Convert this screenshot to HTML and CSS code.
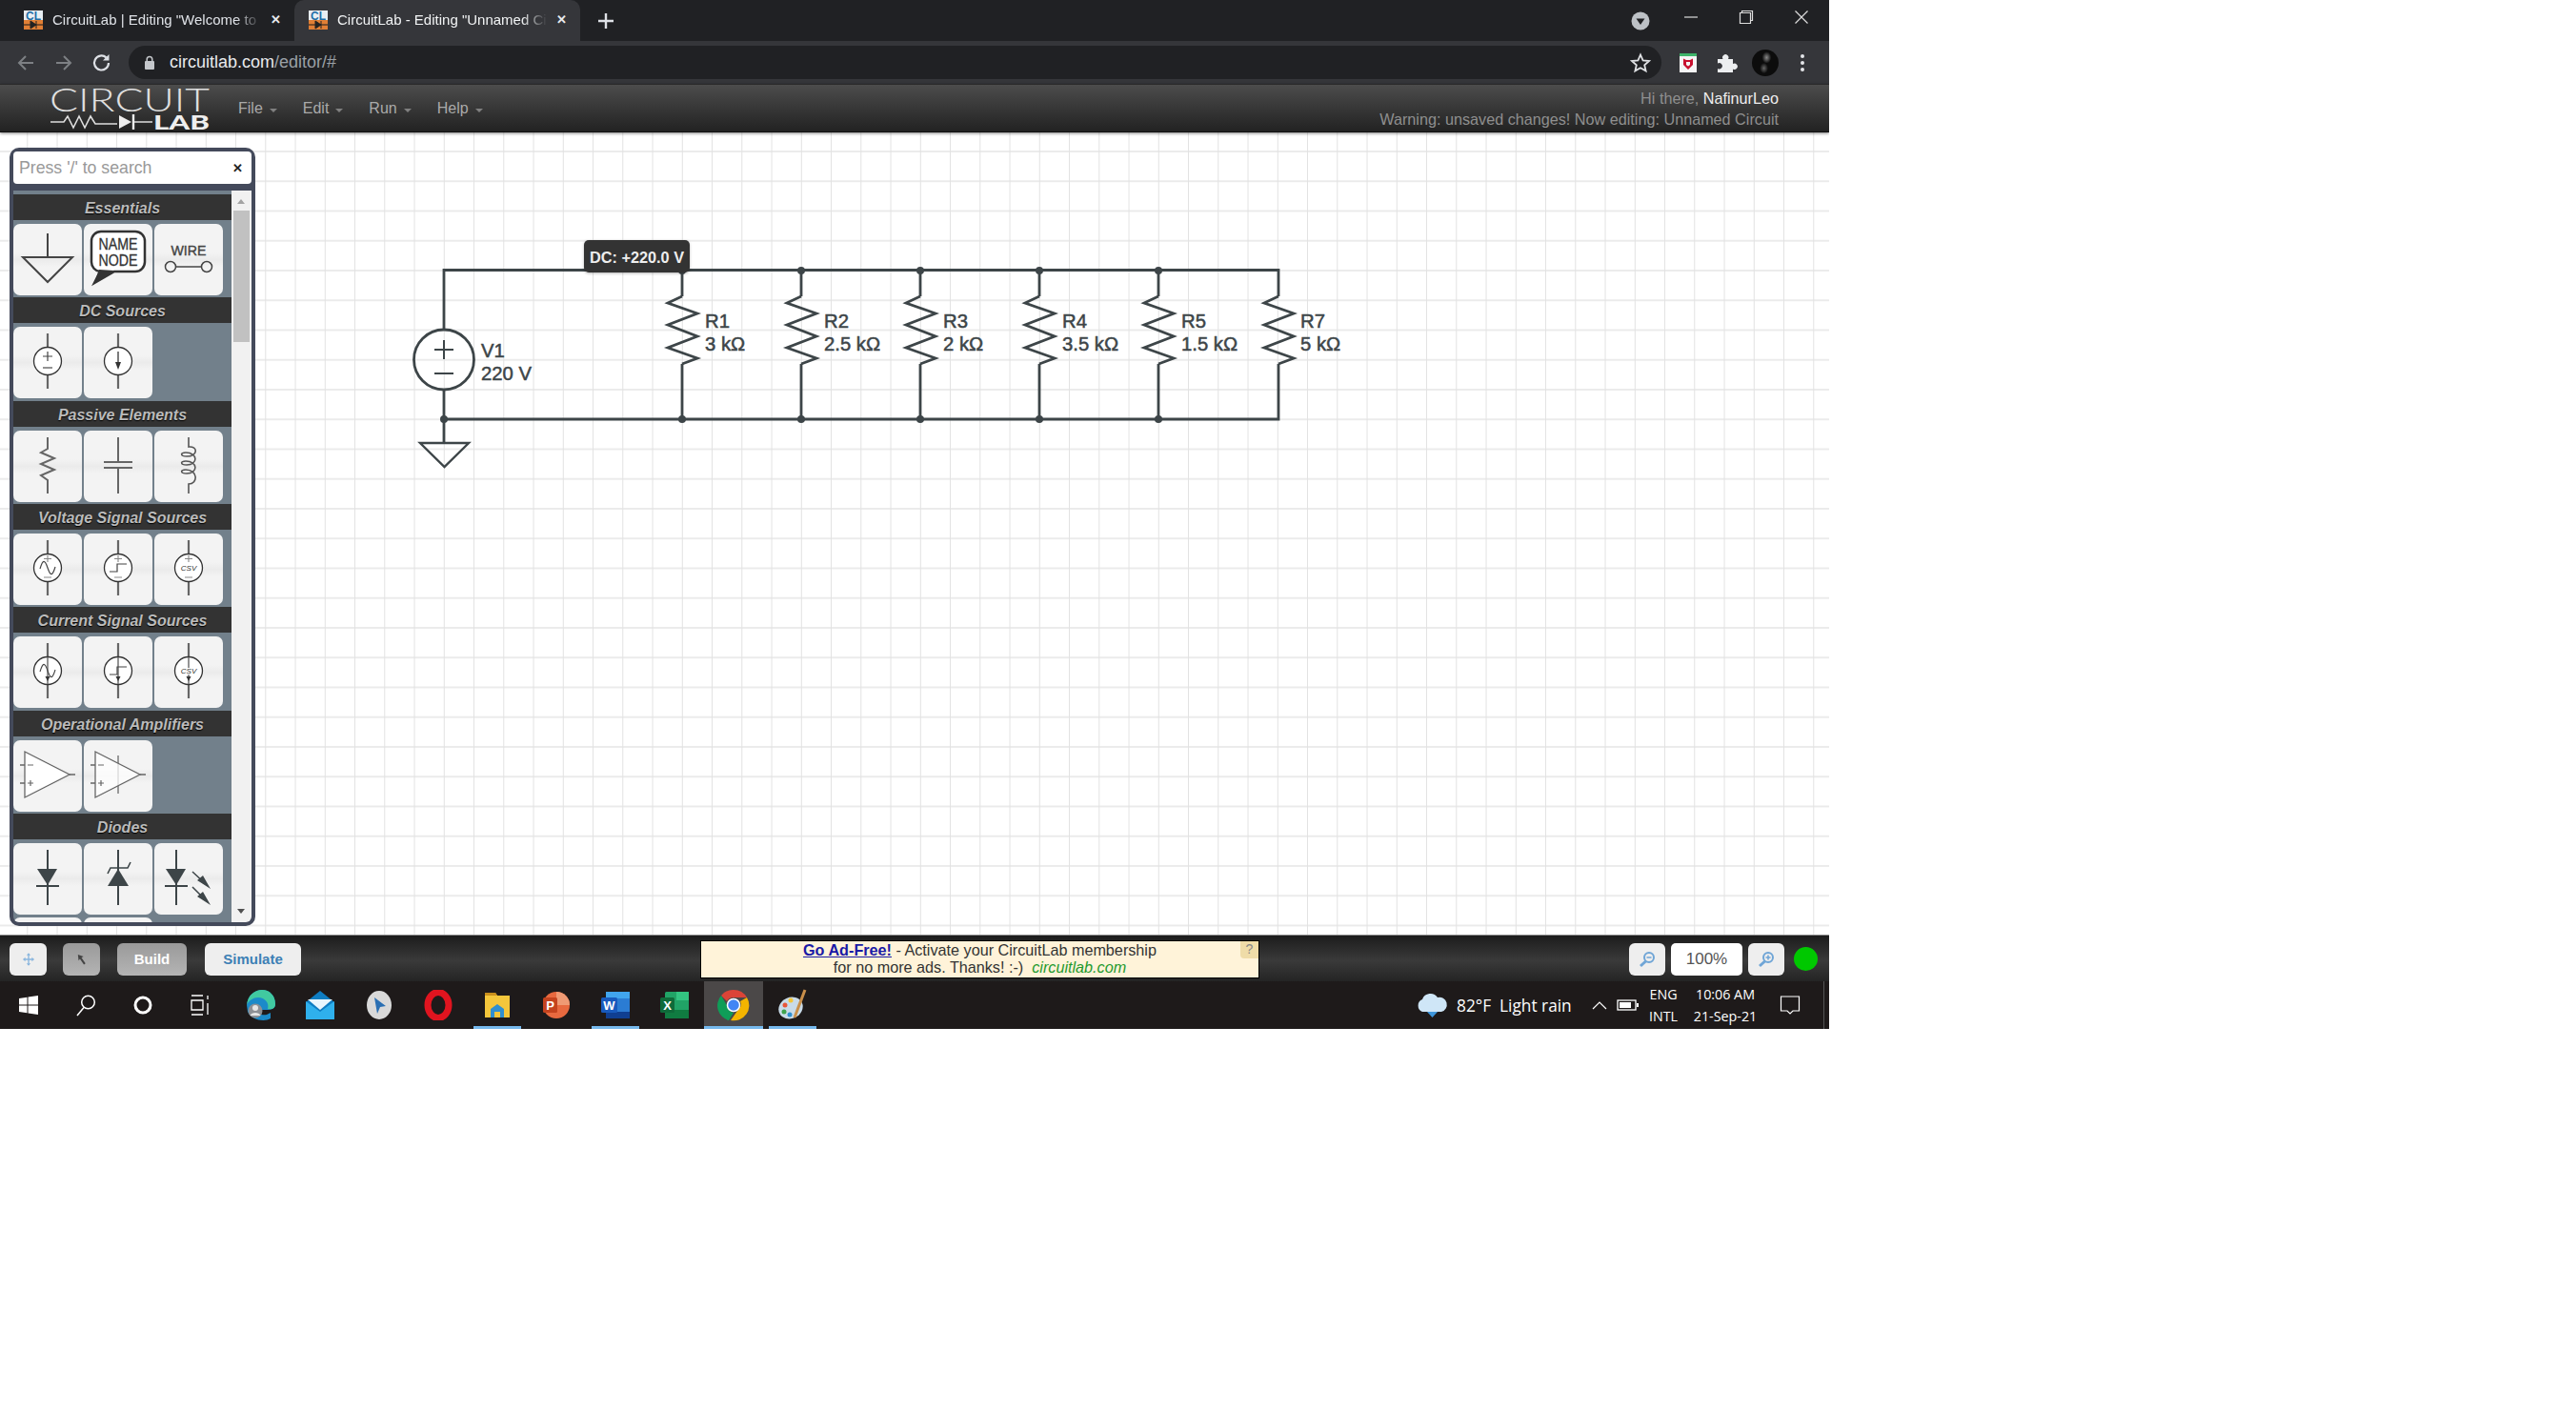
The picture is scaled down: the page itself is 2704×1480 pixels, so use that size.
FILE: index.html
```html
<!DOCTYPE html>
<html lang="en">
<head>
    <meta charset="UTF-8">
    <title>CircuitLab - Editing "Unnamed Circuit"</title>
    <link rel="stylesheet" href="styles.css">
</head>
<body>
<svg class="defs" xmlns="http://www.w3.org/2000/svg">
    <symbol id="favicon" viewBox="0 0 20 20">
        <rect width="20" height="10" fill="#e8eef2"/>
        <rect y="10" width="20" height="10" fill="#e07f35"/>
        <text x="10" y="9.5" class="fav-text">CL</text>
        <path d="M0 15H20" stroke="#3a2a20" stroke-width="1.2"/>
        <path d="M7 11L13 15L7 19Z M13 11V19" fill="#222" stroke="#222"/>
    </symbol>
    <symbol id="src" viewBox="0 0 72 75">
        <path d="M36 7V65" stroke="#666" stroke-width="2.2"/>
        <circle cx="36" cy="36" r="14.5" fill="#fff" stroke="#333" stroke-width="1.3"/>
    </symbol>
    <symbol id="signs" viewBox="0 0 72 75">
        <path d="M32 26.5H40M36 23V30M32 46H40" stroke="#888" stroke-width="1.1"/>
    </symbol>
    <symbol id="tip" viewBox="0 0 72 75">
        <path d="M36 22V50" stroke="#666" stroke-width="1.4"/>
        <path d="M33.5 42H38.500L36 47Z" fill="#333"/>
    </symbol>
</svg>

<div class="screen">
    <div class="tabstrip">
        <div class="tab tab-first">
            <svg class="favicon"><use href="#favicon"/></svg>
            <span class="tab-title">CircuitLab | Editing "Welcome to</span>
            <span class="tab-close">✕</span>
        </div>
        <div class="tab tab-active">
            <svg class="favicon"><use href="#favicon"/></svg>
            <span class="tab-title">CircuitLab - Editing "Unnamed Ci</span>
            <span class="tab-close">✕</span>
        </div>
        <svg class="newtab" width="24" height="24" viewBox="0 0 24 24"><path d="M12 4V20M4 12H20" stroke="#dee1e6" stroke-width="2.4"/></svg>
        <svg class="profile-menu" width="20" height="20" viewBox="0 0 20 20"><circle cx="10" cy="10" r="9.5" fill="#bdc1c6"/><path d="M5.500 7.500H14.500L10 14Z" fill="#202124"/></svg>
        <div class="caption"><svg width="16" height="16" viewBox="0 0 16 16"><path d="M1 8H15" stroke="#ddd" stroke-width="1.2"/></svg></div>
        <div class="caption"><svg width="16" height="16" viewBox="0 0 16 16"><path d="M3.500 3.500V1.500H14.500V11.500H12.500M1.500 3.500H12.500V14.500H1.500Z" fill="none" stroke="#ddd" stroke-width="1.2"/></svg></div>
        <div class="caption"><svg width="16" height="16" viewBox="0 0 16 16"><path d="M1.500 1.500L14.500 14.500M14.500 1.500L1.500 14.500" stroke="#ddd" stroke-width="1.2"/></svg></div>
    </div>

    <div class="toolbar">
        <svg class="nav" width="24" height="24" viewBox="0 0 24 24"><path d="M20 12H5M12 5L5 12L12 19" fill="none" stroke="#7d8084" stroke-width="2"/></svg>
        <svg class="nav" width="24" height="24" viewBox="0 0 24 24"><path d="M4 12H19M12 5L19 12L12 19" fill="none" stroke="#7d8084" stroke-width="2"/></svg>
        <svg class="nav" width="24" height="24" viewBox="0 0 24 24"><path d="M19 12A7.500 7.500 0 1 1 16.500 6.400" fill="none" stroke="#dee1e6" stroke-width="2.2"/><path d="M19.500 3V9.500H13Z" fill="#dee1e6"/></svg>
        <div class="omnibox">
            <svg width="12" height="16" viewBox="0 0 12 16"><rect x="1" y="6" width="10" height="9" rx="1" fill="#c4c7cb"/><path d="M3.200 6V4.200A2.800 2.800 0 0 1 8.800 4.200V6" fill="none" stroke="#c4c7cb" stroke-width="1.5"/></svg>
            <span class="url">circuitlab.com<span class="url-path">/editor/#</span></span>
            <svg class="star" width="22" height="22" viewBox="0 0 22 22"><path d="M11 2.500L13.600 8.300L20 9L15.200 13.200L16.600 19.400L11 16.200L5.400 19.400L6.800 13.200L2 9L8.400 8.300Z" fill="none" stroke="#e0e2e5" stroke-width="1.8"/></svg>
        </div>
        <svg class="ext" width="24" height="24" viewBox="0 0 24 24"><rect x="3" y="2" width="18" height="20" fill="#f5f5f5"/><rect x="3" y="2" width="18" height="3" fill="#3fb56a"/><path d="M7 7.500L10 9H14L17 7.500V14L12 19L7 14Z M10 11V14L12 15.500L14 14V11Z" fill="#c8102e" fill-rule="evenodd"/></svg>
        <svg class="ext" width="24" height="24" viewBox="0 0 24 24"><path d="M3 8H8.500A3.200 3.200 0 1 1 14 8H19V13A3.200 3.200 0 1 1 19 18.500V22H3V18A3.200 3.200 0 1 0 3 12.500Z" fill="#eceef0"/></svg>
        <div class="avatar"></div>
        <svg class="kebab" width="24" height="24" viewBox="0 0 24 24"><circle cx="12" cy="5" r="2" fill="#e3e5e8"/><circle cx="12" cy="12" r="2" fill="#e3e5e8"/><circle cx="12" cy="19" r="2" fill="#e3e5e8"/></svg>
    </div>

    <div class="appbar">
        <svg class="logo" width="170" height="48" viewBox="0 0 170 48">
            <text x="0" y="27" textLength="168" lengthAdjust="spacingAndGlyphs" class="logo-top">CIRCUIT</text>
            <path d="M1 38H15L19 32L25 44L31 32L37 44L43 32L48 40H71M88 38H108" fill="none" stroke="#ddd" stroke-width="1.6"/>
            <path d="M73 31L86 38L73 45Z" fill="#eee"/>
            <path d="M88 30V46" stroke="#eee" stroke-width="2.4"/>
            <text x="109" y="46" textLength="59" lengthAdjust="spacingAndGlyphs" class="logo-lab">LAB</text>
        </svg>
        <div class="menu">
            <span class="menu-item">File<i class="caret"></i></span>
            <span class="menu-item">Edit<i class="caret"></i></span>
            <span class="menu-item">Run<i class="caret"></i></span>
            <span class="menu-item">Help<i class="caret"></i></span>
        </div>
        <div class="userinfo">
            <div>Hi there, <b>NafinurLeo</b></div>
            <div>Warning: unsaved changes! Now editing: Unnamed Circuit</div>
        </div>
    </div>

    <div class="canvas">
        <svg class="circuit" width="1920" height="842" viewBox="0 139 1920 842">
            <defs>
                <path id="res" d="M0 311L-15 318L16 329L-15 341L16 353L-15 365L16 376L0 382"/>
            </defs>
            <g class="wires">
                <path d="M466 346V283.500H1342V311M1342 382V440H466M466 409V465"/>
                <path d="M716 283.500V311M841 283.500V311M966 283.500V311M1091 283.500V311M1216 283.500V311"/>
                <path d="M716 382V440M841 382V440M966 382V440M1091 382V440M1216 382V440"/>
                <use href="#res" x="716"/><use href="#res" x="841"/><use href="#res" x="966"/>
                <use href="#res" x="1091"/><use href="#res" x="1216"/><use href="#res" x="1342"/>
                <circle cx="466" cy="377.500" r="31.500"/>
                <path d="M456 367H476M466 357V377M456 392H476" stroke-width="2"/>
                <path d="M441 465H492L466.500 490Z" stroke-width="2.400"/>
            </g>
            <g class="dots">
                <circle cx="716" cy="284" r="4"/><circle cx="841" cy="284" r="4"/><circle cx="966" cy="284" r="4"/>
                <circle cx="1091" cy="284" r="4"/><circle cx="1216" cy="284" r="4"/>
                <circle cx="466" cy="440" r="4"/><circle cx="716" cy="440" r="4"/><circle cx="841" cy="440" r="4"/>
                <circle cx="966" cy="440" r="4"/><circle cx="1091" cy="440" r="4"/><circle cx="1216" cy="440" r="4"/>
            </g>
            <g class="labels">
                <text x="505" y="375">V1</text><text x="505" y="399">220 V</text>
                <text x="740" y="344">R1</text><text x="740" y="368">3 kΩ</text>
                <text x="865" y="344">R2</text><text x="865" y="368">2.5 kΩ</text>
                <text x="990" y="344">R3</text><text x="990" y="368">2 kΩ</text>
                <text x="1115" y="344">R4</text><text x="1115" y="368">3.5 kΩ</text>
                <text x="1240" y="344">R5</text><text x="1240" y="368">1.5 kΩ</text>
                <text x="1365" y="344">R7</text><text x="1365" y="368">5 kΩ</text>
            </g>
        </svg>
        <div class="probe">DC: +220.0 V</div>

        <div class="palette">
            <div class="search"><span>Press '/' to search</span><b>✕</b></div>
            <div class="parts">
                <div class="parts-list">
                    <div class="section">
                        <h3>Essentials</h3>
                        <div class="tiles">
                            <div class="tile"><svg viewBox="0 0 72 75"><path d="M36 10V35M10 35H62L36 61Z" fill="none" stroke="#444" stroke-width="2"/></svg></div>
                            <div class="tile"><svg viewBox="0 0 72 75"><path d="M18 8H54A10 10 0 0 1 64 18V40A10 10 0 0 1 54 50H32L11 62L17 50A10 10 0 0 1 8 40V18A10 10 0 0 1 18 8Z" fill="#fff" stroke="#333" stroke-width="2.500"/><path d="M32 49L11 62L16 48Z" fill="#333"/><text x="36" y="27" textLength="41" lengthAdjust="spacingAndGlyphs" class="tile-name">NAME</text><text x="36" y="44" textLength="41" lengthAdjust="spacingAndGlyphs" class="tile-name">NODE</text></svg></div>
                            <div class="tile"><svg viewBox="0 0 72 75"><text x="36" y="33" textLength="37" lengthAdjust="spacingAndGlyphs" class="tile-wire">WIRE</text><circle cx="17" cy="45" r="5.500" fill="none" stroke="#444" stroke-width="1.500"/><circle cx="55" cy="45" r="5.500" fill="none" stroke="#444" stroke-width="1.500"/><path d="M22.500 45H49.500" stroke="#444" stroke-width="1.500"/></svg></div>
                        </div>
                    </div>
                    <div class="section">
                        <h3>DC Sources</h3>
                        <div class="tiles">
                            <div class="tile"><svg viewBox="0 0 72 75"><use href="#src"/><path d="M31 31H41M36 26V36" stroke="#444" stroke-width="1.200"/><path d="M31 43H41" stroke="#777" stroke-width="1.600"/></svg></div>
                            <div class="tile"><svg viewBox="0 0 72 75"><use href="#src"/><path d="M36 26V42" stroke="#444" stroke-width="1.400"/><path d="M33 37H39L36 45Z" fill="#333"/></svg></div>
                        </div>
                    </div>
                    <div class="section">
                        <h3>Passive Elements</h3>
                        <div class="tiles">
                            <div class="tile"><svg viewBox="0 0 72 75"><path d="M36 7V19L29 23L43 29L29 35L43 41L29 47L36 52V66" fill="none" stroke="#666" stroke-width="2"/></svg></div>
                            <div class="tile"><svg viewBox="0 0 72 75"><path d="M36 7V33M36 39V66" stroke="#666" stroke-width="2"/><path d="M21 33H51M21 39H51" stroke="#666" stroke-width="2"/></svg></div>
                            <div class="tile"><svg viewBox="0 0 72 75"><path d="M36 7V17C46 16 46 27 34 27C27 27 27 23 33 23C46 23 46 36 34 36C27 36 27 32 33 32C46 32 46 45 34 45C27 45 27 41 33 41C46 41 46 56 36 56V66" fill="none" stroke="#555" stroke-width="1.600"/></svg></div>
                        </div>
                    </div>
                    <div class="section">
                        <h3>Voltage Signal Sources</h3>
                        <div class="tiles">
                            <div class="tile"><svg viewBox="0 0 72 75"><use href="#src"/><use href="#signs"/><path d="M28 37C31 27 33 27 36 36C39 45 41 45 44 35" fill="none" stroke="#444" stroke-width="1.200"/></svg></div>
                            <div class="tile"><svg viewBox="0 0 72 75"><use href="#src"/><use href="#signs"/><path d="M27 40H35V32H45" fill="none" stroke="#444" stroke-width="1.200"/></svg></div>
                            <div class="tile"><svg viewBox="0 0 72 75"><use href="#src"/><use href="#signs"/><text x="36" y="39" class="tile-csv">CSV</text></svg></div>
                        </div>
                    </div>
                    <div class="section">
                        <h3>Current Signal Sources</h3>
                        <div class="tiles">
                            <div class="tile"><svg viewBox="0 0 72 75"><use href="#src"/><use href="#tip"/><path d="M28 37C31 27 33 27 36 36C39 45 41 45 44 35" fill="none" stroke="#444" stroke-width="1.100"/></svg></div>
                            <div class="tile"><svg viewBox="0 0 72 75"><use href="#src"/><use href="#tip"/><path d="M27 40H35V32H45" fill="none" stroke="#444" stroke-width="1.200"/></svg></div>
                            <div class="tile"><svg viewBox="0 0 72 75"><use href="#src"/><use href="#tip"/><rect x="27" y="33" width="18" height="7" fill="#fff"/><text x="36" y="39" class="tile-csv">CSV</text></svg></div>
                        </div>
                    </div>
                    <div class="section">
                        <h3>Operational Amplifiers</h3>
                        <div class="tiles">
                            <div class="tile"><svg viewBox="0 0 72 75"><path d="M59 36H65M7 26H12M7 45H12" stroke="#666" stroke-width="1.300"/><path d="M12 12V60L59 36Z" fill="#fff" stroke="#666" stroke-width="1.300"/><path d="M15 26H21M15 45H21M18 42V48" stroke="#666" stroke-width="1.200"/></svg></div>
                            <div class="tile"><svg viewBox="0 0 72 75"><path d="M36 16V56" stroke="#999" stroke-width="2"/><path d="M59 36H65M7 26H12M7 45H12" stroke="#666" stroke-width="1.300"/><path d="M12 12V60L59 36Z" fill="#fff" fill-opacity=".75" stroke="#666" stroke-width="1.300"/><path d="M15 26H21M15 45H21M18 42V48" stroke="#666" stroke-width="1.200"/></svg></div>
                        </div>
                    </div>
                    <div class="section section-last">
                        <h3>Diodes</h3>
                        <div class="tiles">
                            <div class="tile"><svg viewBox="0 0 72 75"><path d="M36 7V65M24 45H48" stroke="#3d4548" stroke-width="2"/><path d="M25 27H46L36 44Z" fill="#3d4548"/></svg></div>
                            <div class="tile"><svg viewBox="0 0 72 75"><path d="M36 7V65" stroke="#3d4548" stroke-width="2"/><path d="M25 45H47L36 27Z" fill="#3d4548"/><path d="M25 32L28 26H46L49 20" fill="none" stroke="#3d4548" stroke-width="1.600"/></svg></div>
                            <div class="tile"><svg viewBox="0 0 72 75"><path d="M23 7V65M11 45H35" stroke="#3d4548" stroke-width="2"/><path d="M12 27H33L23 44Z" fill="#3d4548"/><path d="M40 30L54 43M40 46L54 60" stroke="#3d4548" stroke-width="1.500"/><path d="M59 48L45 39L51 34Z M59 65L45 56L51 51Z" fill="#3d4548"/></svg></div>
                            <div class="tile"></div>
                            <div class="tile"></div>
                        </div>
                    </div>
                </div>
                <div class="scrollbar">
                    <i class="arrow-up"></i>
                    <div class="thumb"></div>
                    <i class="arrow-down"></i>
                </div>
            </div>
        </div>
    </div>

    <div class="bottombar">
        <div class="btn btn-light btn-icon"><svg width="12" height="14" viewBox="0 0 14 16"><path d="M7 1V15M1 8H13" stroke="#8ab6de" stroke-width="1.600"/><path d="M7 0L9.500 3H4.500Z M7 16L9.500 13H4.500Z M0 8L3 5.500V10.500Z M14 8L11 5.500V10.500Z" fill="#8ab6de"/></svg></div>
        <div class="btn btn-dark btn-icon"><svg width="10" height="12" viewBox="0 0 12 14"><path d="M1 1L8 3.500L5.500 5L10.500 12L8.500 13.500L3.500 6.500L1.800 8.500Z" fill="#444"/></svg></div>
        <div class="btn btn-dark btn-build">Build</div>
        <div class="btn btn-light btn-sim">Simulate</div>
        <div class="ad">
            <div><a href="#">Go Ad-Free!</a> - Activate your CircuitLab membership</div>
            <div>for no more ads. Thanks! :-) &nbsp;<em>circuitlab.com</em></div>
            <span class="ad-help">?</span>
        </div>
        <div class="zoom">
            <div class="btn btn-light btn-zoom"><svg width="18" height="18" viewBox="0 0 18 18"><circle cx="11" cy="7" r="5" fill="none" stroke="#6fa5d6" stroke-width="2"/><path d="M8.500 7H13.500" stroke="#6fa5d6" stroke-width="1.500"/><path d="M7.500 11L2 16" stroke="#6fa5d6" stroke-width="3"/></svg></div>
            <div class="zoom-value">100%</div>
            <div class="btn btn-light btn-zoom"><svg width="18" height="18" viewBox="0 0 18 18"><circle cx="11" cy="7" r="5" fill="none" stroke="#6fa5d6" stroke-width="2"/><path d="M8.500 7H13.500M11 4.500V9.500" stroke="#6fa5d6" stroke-width="1.500"/><path d="M7.500 11L2 16" stroke="#6fa5d6" stroke-width="3"/></svg></div>
            <div class="status"></div>
        </div>
    </div>

    <div class="taskbar">
        <div class="task-sys"><svg width="22" height="22" viewBox="0 0 22 22"><path d="M1 4L9.500 2.800V10.400H1ZM10.500 2.600L21 1V10.400H10.500ZM1 11.500H9.500V19.200L1 18ZM10.500 11.500H21V21L10.500 19.400Z" fill="#fff"/></svg></div>
        <div class="task-sys"><svg width="22" height="24" viewBox="0 0 22 24"><circle cx="13.500" cy="9" r="6.800" fill="none" stroke="#fff" stroke-width="1.500"/><path d="M9 14.500L2 23" stroke="#fff" stroke-width="1.500"/></svg></div>
        <div class="task-sys"><svg width="22" height="22" viewBox="0 0 22 22"><circle cx="11" cy="11" r="8" fill="none" stroke="#fff" stroke-width="3"/></svg></div>
        <div class="task-sys"><svg width="22" height="24" viewBox="0 0 22 24"><path d="M2 2H14M2 22H14M2 7H14V17H2ZM19 2V6M19 10V22" fill="none" stroke="#fff" stroke-width="1.300"/></svg></div>
        <div class="task-item task-first"><svg width="32" height="34" viewBox="0 0 32 34"><path d="M1 17C2 6 10 1 17 1C25 1 31 7 31 16C31 21 26 22 22 22H11C12 26 17 28 22 27L26 25V31C20 35 6 33 2 24Z" fill="#1b8ac9"/><path d="M17 1C25 1 31 7 31 16C31 21 26 22 23 21C25 15 20 9 13 9C8 9 3 12 1 17C2 6 10 1 17 1Z" fill="#41c9a0"/><circle cx="10" cy="23" r="7.500" fill="#8d9095"/><circle cx="10" cy="20" r="3" fill="#e6e6e6"/><path d="M4.500 28C6 24 14 24 15.500 28Z" fill="#e6e6e6"/></svg></div>
        <div class="task-item"><svg width="32" height="30" viewBox="0 0 32 30"><path d="M16 0L31 12V30H1V12Z" fill="#0f7dc2"/><path d="M1 11L16 22L31 11V30H1Z" fill="#2fb0ec"/><path d="M3 9H29L16 20Z" fill="#e9f6fd"/></svg></div>
        <div class="task-item"><svg width="28" height="30" viewBox="0 0 28 30"><ellipse cx="14" cy="15" rx="13" ry="15" fill="#d9d9d9"/><path d="M9 7L21 16L15 17L12 24Z" fill="#2a6fb3"/></svg></div>
        <div class="task-item"><svg width="30" height="32" viewBox="0 0 30 32"><ellipse cx="15" cy="16" rx="11" ry="13.500" fill="none" stroke="#e0141f" stroke-width="7"/></svg></div>
        <div class="task-item task-open"><svg width="30" height="30" viewBox="0 0 30 30"><path d="M2 2H13L15 5H28V28H2Z" fill="#f4c63b"/><path d="M2 2H13L15 5H2Z" fill="#c98f1c"/><path d="M8 28V19L15 14L22 19V28H18V22H12V28Z" fill="#2f8fd0"/></svg></div>
        <div class="task-item"><svg width="30" height="30" viewBox="0 0 30 30"><circle cx="15" cy="15" r="14" fill="#e8693f"/><path d="M15 1A14 14 0 0 1 29 15H15Z" fill="#ef9a74"/><rect x="1" y="7" width="15" height="16" rx="1.500" fill="#c4431e"/><text x="8.500" y="20" class="app-letter">P</text></svg></div>
        <div class="task-item task-open"><svg width="32" height="30" viewBox="0 0 32 30"><rect x="6" y="1" width="25" height="28" rx="1.500" fill="#2b7cd3"/><rect x="6" y="1" width="25" height="7" fill="#41a5ee"/><rect x="6" y="22" width="25" height="7" fill="#103f91"/><rect x="1" y="7" width="17" height="16" rx="1.500" fill="#185abd"/><text x="9.500" y="20" class="app-letter">W</text></svg></div>
        <div class="task-item"><svg width="32" height="30" viewBox="0 0 32 30"><rect x="6" y="1" width="25" height="28" rx="1.500" fill="#21a366"/><rect x="18" y="1" width="13" height="9" fill="#33c481"/><rect x="6" y="20" width="25" height="9" fill="#107c41"/><rect x="1" y="7" width="15" height="16" rx="1.500" fill="#0f6b3a"/><text x="8.500" y="20" class="app-letter">X</text></svg></div>
        <div class="task-item task-open task-active"><svg width="34" height="34" viewBox="0 0 34 34"><path d="M17 1A16 16 0 0 1 31 9H17A8 8 0 0 0 10 13L4 7A16 16 0 0 1 17 1Z" fill="#db4437"/><path d="M4 7L11 19A8 8 0 0 0 17 25L12 33A16 16 0 0 1 4 7Z" fill="#0f9d58"/><path d="M31 9A16 16 0 0 1 14 33L21 23A8 8 0 0 0 24 13Z" fill="#f4b400"/><circle cx="17" cy="17" r="6.500" fill="#4285f4" stroke="#fff" stroke-width="1.500"/></svg></div>
        <div class="task-item task-open"><svg width="34" height="34" viewBox="0 0 34 34"><ellipse cx="15" cy="20" rx="13" ry="11" fill="#c9dbe8" transform="rotate(-25 15 20)"/><circle cx="9" cy="17" r="2.500" fill="#e8563a"/><circle cx="15" cy="12" r="2.500" fill="#f4c63b"/><circle cx="8" cy="24" r="2.500" fill="#3fa34d"/><circle cx="14" cy="27" r="2.500" fill="#2f8fd0"/><path d="M30 1L19 30" stroke="#c98f4a" stroke-width="3"/></svg></div>
        <div class="tray">
            <svg width="36" height="26" viewBox="0 0 36 26"><path d="M8 20A7 7 0 0 1 8 7A9 9 0 0 1 24 5A7.500 7.500 0 0 1 28 20Z" fill="#cfe6f7"/><path d="M13 20H24L18.500 26Z" fill="#3f97dc"/></svg>
            <span class="weather">82°F &nbsp;Light rain</span>
            <svg class="tray-caret" width="20" height="12" viewBox="0 0 20 12"><path d="M3 10L10 3L17 10" fill="none" stroke="#fff" stroke-width="1.200"/></svg>
            <svg class="tray-battery" width="24" height="14" viewBox="0 0 24 14"><rect x="1" y="2" width="19" height="10" fill="none" stroke="#fff" stroke-width="1.300"/><rect x="3" y="4" width="12" height="6" fill="#fff"/><rect x="21" y="5" width="2" height="4" fill="#fff"/></svg>
            <div class="tray-lang"><div>ENG</div><div>INTL</div></div>
            <div class="tray-clock"><div>10:06 AM</div><div>21-Sep-21</div></div>
            <svg class="tray-notify" width="22" height="22" viewBox="0 0 22 22"><path d="M1.500 2H20.500V17H14L11 20L8 17H1.500Z" fill="none" stroke="#fff" stroke-width="1.200"/></svg>
            <i class="tray-edge"></i>
        </div>
    </div>
</div>
</body>
</html>
```

FILE: styles.css
```css
body {
    margin: 0;
    background-color: #ffffff;
    font-family: "Liberation Sans", Arial, sans-serif;
}
.defs {
    display: none;
}
.fav-text {
    font: bold 12px "Liberation Sans", sans-serif;
    fill: #1f6ea8;
    text-anchor: middle;
}
.screen {
    width: 1920px;
    height: 1080px;
    display: flex;
    flex-direction: column;
    overflow: hidden;
}

/* browser tabs */
.tabstrip {
    height: 43px;
    flex: none;
    display: flex;
    align-items: flex-end;
    background-color: #202124;
}
.tab {
    position: relative;
    width: 300px;
    height: 43px;
    box-sizing: border-box;
    padding: 0 10px 2px 15px;
    display: flex;
    align-items: center;
    color: #dee1e6;
    font-size: 15px;
    border-radius: 10px 10px 0 0;
}
.tab-first {
    width: 299px;
    margin-left: 10px;
}
.tab-active {
    background-color: #35363a;
    color: #f1f3f4;
}
.favicon {
    width: 20px;
    height: 20px;
    flex: none;
}
.tab-title {
    flex: 1;
    min-width: 0;
    margin-left: 10px;
    white-space: nowrap;
    -webkit-mask-image: linear-gradient(to right, #000 86%, transparent 98%);
    mask-image: linear-gradient(to right, #000 86%, transparent 98%);
}
.tab-close {
    width: 20px;
    text-align: center;
    font-size: 13px;
    font-weight: bold;
    color: #e8eaed;
}
.newtab {
    margin: 0 0 9px 15px;
}
.profile-menu {
    margin: 0 14px 11px auto;
}
.caption {
    width: 58px;
    height: 36px;
    margin-bottom: 7px;
    display: flex;
    align-items: center;
    justify-content: center;
}

/* browser toolbar */
.toolbar {
    height: 45px;
    flex: none;
    box-sizing: border-box;
    padding: 0 16px 0 15px;
    display: flex;
    align-items: center;
    background-color: #35363a;
}
.nav {
    margin-right: 16px;
    flex: none;
}
.omnibox {
    flex: 1;
    height: 35px;
    box-sizing: border-box;
    padding: 0 11px 0 16px;
    display: flex;
    align-items: center;
    border-radius: 18px;
    background-color: #202124;
}
.url {
    flex: 1;
    margin-left: 15px;
    font-size: 18px;
    color: #e8eaed;
}
.url-path {
    color: #9aa0a6;
}
.ext {
    margin-left: 16px;
    flex: none;
}
.avatar {
    width: 28px;
    height: 28px;
    margin-left: 15px;
    flex: none;
    border-radius: 50%;
    background:
        radial-gradient(ellipse at 55% 30%, #8a8a8a 0, transparent 22%),
        radial-gradient(ellipse at 45% 70%, #666 0, transparent 20%),
        #0c0c0c;
}
.kebab {
    margin-left: 13px;
    flex: none;
}

/* circuitlab header */
.appbar {
    height: 51px;
    flex: none;
    box-sizing: border-box;
    padding: 1px 0 0 52px;
    display: flex;
    align-items: center;
    background: linear-gradient(#4c4c4c, #222222);
    border-top: 1px solid #2a2a2a;
    border-bottom: 1px solid #111;
    box-shadow: 0 1px 3px rgba(0,0,0,0.5);
    position: relative;
    z-index: 2;
}
.logo {
    flex: none;
    overflow: visible;
    margin-top: -1px;
}
.logo-top {
    font: 300 33px Lato, sans-serif;
    fill: #e0e0e0;
}
.logo-lab {
    font: 900 20px Lato, sans-serif;
    fill: #eeeeee;
}
.menu {
    margin-left: 28px;
    display: flex;
    gap: 27px;
}
.menu-item {
    font-size: 16px;
    color: #aaaaaa;
    display: flex;
    align-items: center;
}
.caret {
    margin: 4px 0 0 7px;
    border-top: 4px solid #808080;
    border-left: 4.5px solid transparent;
    border-right: 4.5px solid transparent;
}
.userinfo {
    margin-left: auto;
    padding-right: 53px;
    text-align: right;
    font-size: 16.2px;
    line-height: 22px;
    color: #8f8f8f;
}
.userinfo b {
    font-weight: normal;
    color: #eeeeee;
}

/* drawing area */
.canvas {
    position: relative;
    flex: 1;
    min-height: 0;
    background-color: #ffffff;
    background-image:
        linear-gradient(to right, #e2e2e2 1px, transparent 1px),
        linear-gradient(to bottom, #ebebeb 2px, transparent 2px);
    background-size: 31.25px 31.25px;
    background-position: 28.3px 19px;
}
.circuit {
    position: absolute;
    left: 0;
    top: 0;
}
.wires, .wires use {
    fill: none;
    stroke: #3d4548;
    stroke-width: 2.8;
}
.dots {
    fill: #3d4548;
}
.labels {
    font-size: 20.3px;
    fill: #3d4548;
    stroke: #3d4548;
    stroke-width: 0.5;
}
.probe {
    position: absolute;
    left: 613px;
    top: 113px;
    width: 111px;
    height: 34px;
    line-height: 36px;
    text-align: center;
    font-size: 16.3px;
    font-weight: bold;
    color: #eeeeee;
    background-color: #333333;
    border-radius: 5px;
    box-shadow: 0 1px 3px rgba(0,0,0,0.3);
}

/* parts palette */
.palette {
    position: absolute;
    left: 10px;
    top: 16px;
    width: 258px;
    height: 817px;
    box-sizing: border-box;
    padding: 4px;
    display: flex;
    flex-direction: column;
    gap: 7px;
    background-color: #444a5b;
    border-radius: 10px;
}
.search {
    height: 34px;
    flex: none;
    box-sizing: border-box;
    padding: 0 9px 0 6px;
    display: flex;
    align-items: center;
    justify-content: space-between;
    background-color: #ffffff;
    border-radius: 4px;
    font-size: 17.7px;
    color: #999999;
}
.search b {
    font-size: 13px;
    color: #222222;
}
.parts {
    flex: 1;
    min-height: 0;
    display: flex;
    overflow: hidden;
    border-radius: 0 0 6px 6px;
}
.parts-list {
    width: 229px;
    flex: none;
    padding-top: 4px;
    background-color: #72808b;
    overflow: hidden;
}
.section {
    height: 108.33px;
}
.section-last {
    height: auto;
}
.section h3 {
    margin: 0;
    height: 27px;
    line-height: 29px;
    text-align: center;
    font-size: 16px;
    font-style: italic;
    font-weight: bold;
    color: #bbbbbb;
    background-color: #333333;
    text-shadow: 0 1px 1px #000;
}
.tiles {
    padding-top: 4px;
    display: grid;
    grid-template-columns: repeat(3, 72px);
    column-gap: 2px;
    row-gap: 3px;
}
.tile {
    height: 75px;
    border-radius: 7px;
    background: linear-gradient(#f3f3f3 40%, #ebebeb 50%, #f3f3f3 60%);
}
.tile svg {
    display: block;
    width: 72px;
    height: 75px;
}
.tile-name {
    font: 17px "Liberation Sans", sans-serif;
    fill: #333;
    stroke: #333;
    stroke-width: 0.3;
    text-anchor: middle;
}
.tile-wire {
    font: 15px "Liberation Sans", sans-serif;
    fill: #444;
    stroke: #444;
    stroke-width: 0.4;
    text-anchor: middle;
}
.tile-csv {
    font: italic 8px "Liberation Sans", sans-serif;
    fill: #333;
    text-anchor: middle;
}
.scrollbar {
    width: 21px;
    flex: none;
    position: relative;
    background-color: #f1f1f1;
}
.thumb {
    position: absolute;
    left: 2px;
    top: 21px;
    width: 17px;
    height: 138px;
    background-color: #c1c1c1;
}
.arrow-up, .arrow-down {
    position: absolute;
    left: 6px;
    border-left: 4.5px solid transparent;
    border-right: 4.5px solid transparent;
}
.arrow-up {
    top: 9px;
    border-bottom: 5px solid #a3a3a3;
}
.arrow-down {
    bottom: 9px;
    border-top: 5px solid #505050;
}

/* circuitlab footer */
.bottombar {
    height: 49px;
    flex: none;
    box-sizing: border-box;
    padding: 1px 12px 0 10px;
    display: flex;
    align-items: center;
    background: linear-gradient(#1c1c1c, #3a3a3a 55%, #242424);
    border-top: 1px solid #8a8a8a;
}
.btn {
    height: 34px;
    flex: none;
    box-sizing: border-box;
    display: flex;
    align-items: center;
    justify-content: center;
    border-radius: 6px;
    font-size: 15px;
    font-weight: bold;
}
.btn-light {
    background-color: #eeeeee;
}
.btn-dark {
    background: linear-gradient(#9a9a9a, #b4b4b4);
}
.btn-icon {
    width: 39px;
    margin-right: 17px;
}
.btn-build {
    width: 73px;
    color: #ffffff;
    margin: 0 19px 0 1px;
}
.btn-sim {
    width: 101px;
    color: #3d80b5;
}
.ad {
    position: relative;
    width: 587px;
    height: 40px;
    margin-left: 419px;
    box-sizing: border-box;
    flex: none;
    text-align: center;
    font-size: 16.2px;
    line-height: 18.5px;
    color: #333333;
    background-color: #fff3d9;
    border: 1px solid #000;
}
.ad a {
    color: #1a1aa6;
    font-weight: bold;
}
.ad em {
    color: #1f9a2e;
}
.ad-help {
    position: absolute;
    right: 0;
    top: 0;
    width: 19px;
    height: 18px;
    line-height: 16px;
    font-size: 14px;
    color: #888;
    background-color: #efdca8;
    border-radius: 0 0 0 4px;
}
.zoom {
    margin-left: auto;
    display: flex;
    align-items: center;
    gap: 6px;
}
.btn-zoom {
    width: 38px;
}
.zoom-value {
    width: 75px;
    height: 34px;
    line-height: 34px;
    text-align: center;
    font-size: 17px;
    color: #555555;
    background-color: #ffffff;
    border-radius: 5px;
}
.status {
    width: 25px;
    height: 25px;
    margin-left: 4px;
    border-radius: 50%;
    background-color: #00c800;
}

/* windows taskbar */
.taskbar {
    height: 50px;
    flex: none;
    display: flex;
    align-items: stretch;
    background-color: #1e1a1a;
    font-family: "Open Sans", sans-serif;
    color: #ffffff;
}
.task-sys, .task-item {
    position: relative;
    display: flex;
    align-items: center;
    justify-content: center;
    flex: none;
}
.task-sys {
    width: 60px;
}
.task-item {
    width: 62px;
}
.task-first {
    margin-left: 3px;
}
.app-letter {
    font: bold 13px "Liberation Sans", sans-serif;
    fill: #ffffff;
    text-anchor: middle;
}
.task-open::after {
    content: "";
    position: absolute;
    left: 6px;
    right: 6px;
    bottom: 0;
    height: 3px;
    background-color: #76b9ed;
}
.task-active {
    background-color: #4b4848;
}
.task-active::after {
    left: 0;
    right: 0;
}
.tray {
    margin-left: auto;
    padding-right: 5px;
    display: flex;
    align-items: center;
    font-size: 17.3px;
}
.weather {
    margin-left: 8px;
    width: 120px;
    white-space: nowrap;
}
.tray-caret {
    margin-left: 20px;
}
.tray-battery {
    margin-left: 8px;
}
.tray-lang, .tray-clock {
    text-align: center;
    font-size: 14.3px;
    line-height: 23px;
}
.tray-lang {
    width: 40px;
    margin-left: 5px;
}
.tray-clock {
    width: 80px;
    margin-left: 5px;
    white-space: nowrap;
}
.tray-notify {
    margin-left: 17px;
}
.tray-edge {
    width: 1px;
    height: 50px;
    margin-left: 24px;
    background-color: #555;
}
```
